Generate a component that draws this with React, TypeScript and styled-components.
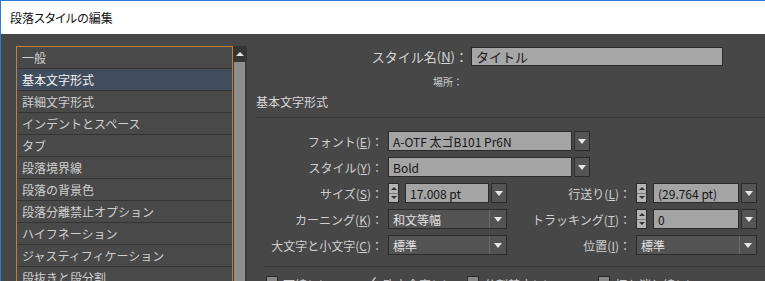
import React from 'react';
import styled, { createGlobalStyle } from 'styled-components';

const GlobalStyle = createGlobalStyle`
  html, body {
    margin: 0;
    padding: 0;
    background: #474747;
  }
  body {
    width: 765px;
    height: 281px;
    overflow: hidden;
    font-family: "Noto Sans CJK JP", "Noto Sans", sans-serif;
  }
`;

const Window = styled.div`
  width: 765px;
  height: 281px;
  overflow: hidden;
  display: flex;
  flex-direction: column;
  box-sizing: border-box;
  border-left: 1px solid #2b7bd4;
  background: #474747;
`;

const TitleBar = styled.div`
  flex: none;
  height: 34px;
  box-sizing: border-box;
  border-top: 1px solid #2b7bd4;
  background: #ffffff;
  display: flex;
  align-items: center;
  padding-left: 9px;
  font-size: 12px;
  color: #111;
  font-feature-settings: "palt";
`;

const Body = styled.div`
  flex: 1;
  display: flex;
  padding: 12px 0 0 15px;
  min-height: 0;
`;

const ListBox = styled.div`
  width: 217px;
  flex: none;
  box-sizing: border-box;
  border: 1px solid #c47f39;
  border-bottom: none;
  background: #494949;
`;

const ListRow = styled.div<{ $selected?: boolean }>`
  height: 21px;
  border-bottom: 1px solid #333333;
  display: flex;
  align-items: center;
  padding-left: 5px;
  font-size: 12px;
  color: ${p => (p.$selected ? '#f4f4f4' : '#cfcfcf')};
  background: ${p => (p.$selected ? '#414d5f' : 'transparent')};
  white-space: nowrap;
`;

const Scrollbar = styled.div`
  width: 14px;
  flex: none;
  display: flex;
  flex-direction: column;
  background: #3b3b3b;
`;

const ScrollUp = styled.div`
  height: 16px;
  display: flex;
  align-items: center;
  justify-content: center;
  background: #353535;
  &::after {
    content: '';
    border-left: 4px solid transparent;
    border-right: 4px solid transparent;
    border-bottom: 4px solid #e8e8e8;
  }
`;

const ScrollThumb = styled.div`
  flex: 1;
  margin: 0 2px 0 1px;
  background: #8f8f8f;
`;

const Panel = styled.div`
  flex: 1;
  display: flex;
  flex-direction: column;
  padding-top: 1px;
`;

const NameRow = styled.div`
  display: grid;
  grid-template-columns: 221px 252px;
  column-gap: 3px;
  height: 19px;
  align-items: center;
`;

const NameLabel = styled.div`
  text-align: right;
  font-size: 13px;
  color: #d4d4d4;
`;

const NameInput = styled.div`
  height: 19px;
  box-sizing: border-box;
  border: 1px solid #2a2a2a;
  background: #a6a6a6;
  color: #1a1a1a;
  font-size: 13px;
  padding-left: 4px;
  display: flex;
  align-items: center;
`;

const PlaceRow = styled.div`
  margin-top: 9px;
  width: 216px;
  text-align: right;
  font-size: 10px;
  line-height: 14px;
  color: #cfcfcf;
`;

const SectionTitle = styled.div`
  margin: 5px 0 0 9px;
  font-size: 12px;
  line-height: 16px;
  color: #d8d8d8;
`;

const Rule = styled.div<{ $inset: number; $gap: number }>`
  margin: ${p => p.$gap}px 0 0 ${p => p.$inset}px;
  height: 1px;
  background: #646464;
  border-bottom: 1px solid #3a3a3a;
`;

const Form = styled.div`
  margin-top: 13px;
  display: grid;
  grid-template-columns: 141px 119px 129px 121px;
  grid-auto-rows: 20px;
  row-gap: 6px;
`;

const Label = styled.div`
  padding-right: 5px;
  font-size: 12px;
  color: #cfcfcf;
  display: flex;
  align-items: center;
  justify-content: flex-end;
  white-space: nowrap;
`;

const Control = styled.div<{ $span?: number; $width?: number }>`
  display: flex;
  align-items: stretch;
  gap: 2px;
  grid-column: ${p => (p.$span ? `span ${p.$span}` : 'auto')};
  ${p => (p.$width ? `width: ${p.$width}px;` : '')}
`;

const Field = styled.div`
  box-sizing: border-box;
  height: 20px;
  flex: 1;
  border: 1px solid #2b2b2b;
  background: #a4a4a4;
  color: #151515;
  font-size: 12px;
  padding-left: 4px;
  display: flex;
  align-items: center;
  white-space: nowrap;
  overflow: hidden;
`;

const DarkSelect = styled.div`
  flex: 1;
  box-sizing: border-box;
  height: 20px;
  border: 1px solid #2b2b2b;
  background: #535353;
  display: flex;
  color: #e2e2e2;
  font-size: 12px;
`;

const DarkValue = styled.div`
  flex: 1;
  padding-left: 4px;
  display: flex;
  align-items: center;
  border-right: 1px solid #6a6a6a;
`;

const ArrowBox = styled.div<{ $framed?: boolean }>`
  width: 16px;
  flex: none;
  box-sizing: border-box;
  display: flex;
  align-items: center;
  justify-content: center;
  ${p => (p.$framed ? 'border: 1px solid #2b2b2b; background: #555555;' : '')}
  &::after {
    content: '';
    border-left: 4px solid transparent;
    border-right: 4px solid transparent;
    border-top: 5px solid #e6e6e6;
  }
`;

const Spinner = styled.div`
  width: 11px;
  flex: none;
  box-sizing: border-box;
  border: 1px solid #2b2b2b;
  background: #b4b4b4;
  display: flex;
  flex-direction: column;
  margin-right: 4px;
`;

const SpinHalf = styled.div<{ $down?: boolean }>`
  flex: 1;
  display: flex;
  align-items: center;
  justify-content: center;
  ${p => (p.$down ? 'border-top: 1px solid #7a7a7a;' : '')}
  &::after {
    content: '';
    border-left: 3px solid transparent;
    border-right: 3px solid transparent;
    ${p => (p.$down ? 'border-top: 3px solid #333;' : 'border-bottom: 3px solid #333;')}
  }
`;

const CheckRow = styled.div`
  margin-top: 9px;
  display: flex;
  padding-left: 19px;
  font-size: 12px;
  color: #cfcfcf;
`;

const CheckItem = styled.div<{ $width: number }>`
  width: ${p => p.$width}px;
  display: flex;
  align-items: flex-start;
  gap: 5px;
  white-space: nowrap;
`;

const Box = styled.div<{ $checked?: boolean }>`
  width: 12px;
  height: 12px;
  box-sizing: border-box;
  border: 1px solid ${p => (p.$checked ? 'transparent' : '#2a2a2a')};
  background: ${p => (p.$checked ? 'transparent' : '#8a8a8a')};
  flex: none;
  color: #e8e8e8;
  font-size: 13px;
  line-height: 10px;
`;

const listItems = [
  '一般',
  '基本文字形式',
  '詳細文字形式',
  'インデントとスペース',
  'タブ',
  '段落境界線',
  '段落の背景色',
  '段落分離禁止オプション',
  'ハイフネーション',
  'ジャスティフィケーション',
  '段抜きと段分割',
];

function Key({ text, k }: { text: string; k: string }) {
  return (
    <>
      {text}(<u>{k}</u>)：
    </>
  );
}

function LightCombo({ value }: { value: string }) {
  return (
    <>
      <Field>{value}</Field>
      <ArrowBox $framed />
    </>
  );
}

function DarkCombo({ value }: { value: string }) {
  return (
    <DarkSelect>
      <DarkValue>{value}</DarkValue>
      <ArrowBox />
    </DarkSelect>
  );
}

function SpinCombo({ value }: { value: string }) {
  return (
    <>
      <Spinner>
        <SpinHalf />
        <SpinHalf $down />
      </Spinner>
      <Field>{value}</Field>
      <ArrowBox $framed />
    </>
  );
}

export default function App() {
  return (
    <>
      <GlobalStyle />
      <Window>
        <TitleBar>段落スタイルの編集</TitleBar>
        <Body>
          <ListBox>
            {listItems.map((item, i) => (
              <ListRow key={item} $selected={i === 1}>
                {item}
              </ListRow>
            ))}
          </ListBox>
          <Scrollbar>
            <ScrollUp />
            <ScrollThumb />
          </Scrollbar>
          <Panel>
            <NameRow>
              <NameLabel>
                <Key text="スタイル名" k="N" />
              </NameLabel>
              <NameInput>タイトル</NameInput>
            </NameRow>
            <PlaceRow>場所：</PlaceRow>
            <SectionTitle>基本文字形式</SectionTitle>
            <Rule $inset={9} $gap={7} />
            <Form>
              <Label><Key text="フォント" k="E" /></Label>
              <Control $span={3} $width={202}>
                <LightCombo value="A-OTF 太ゴB101 Pr6N" />
              </Control>

              <Label><Key text="スタイル" k="Y" /></Label>
              <Control $span={3} $width={202}>
                <LightCombo value="Bold" />
              </Control>

              <Label><Key text="サイズ" k="S" /></Label>
              <Control><SpinCombo value="17.008 pt" /></Control>
              <Label><Key text="行送り" k="L" /></Label>
              <Control><SpinCombo value="(29.764 pt)" /></Control>

              <Label><Key text="カーニング" k="K" /></Label>
              <Control><DarkCombo value="和文等幅" /></Control>
              <Label><Key text="トラッキング" k="T" /></Label>
              <Control><SpinCombo value="0" /></Control>

              <Label><Key text="大文字と小文字" k="C" /></Label>
              <Control><DarkCombo value="標準" /></Control>
              <Label><Key text="位置" k="I" /></Label>
              <Control><DarkCombo value="標準" /></Control>
            </Form>
            <Rule $inset={17} $gap={11} />
            <CheckRow>
              <CheckItem $width={100}><Box />下線(U)</CheckItem>
              <CheckItem $width={101}><Box $checked>✓</Box>欧文合字(G)</CheckItem>
              <CheckItem $width={131}><Box />分割禁止(B)</CheckItem>
              <CheckItem $width={140}><Box />打ち消し線(R)</CheckItem>
            </CheckRow>
          </Panel>
        </Body>
      </Window>
    </>
  );
}
